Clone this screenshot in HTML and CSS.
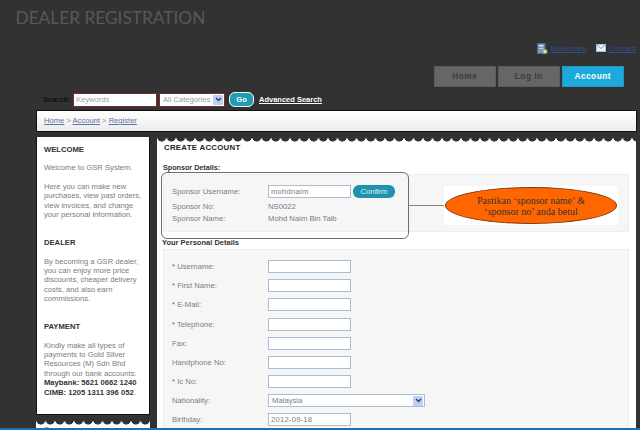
FILE: index.html
```html
<!DOCTYPE html>
<html lang="en">
<head>
    <meta charset="UTF-8">
    <title>Dealer Registration</title>
    <link rel="stylesheet" href="styles.css">
</head>
<body>
    <div class="page">
        <h1 class="page-title">DEALER REGISTRATION</h1>

        <!-- links atas -->
        <div class="top-links">
            <a href="#" class="top-link">
                <svg width="11" height="11" viewBox="0 0 11 11"><rect x="0.500" y="0.500" width="7.500" height="10" fill="#7497bd" stroke="#456b96"/><rect x="2" y="2" width="4.500" height="1.500" fill="#d5e2f0"/><rect x="2" y="5" width="4.500" height="1" fill="#b7cbe0"/><circle cx="8" cy="8.500" r="2.500" fill="#8ab85a"/><path d="M8 7v3M6.500 8.500h3" stroke="#fff" stroke-width="0.800"/></svg>
                <span>Bookmark</span>
            </a>
            <a href="#" class="top-link">
                <svg width="10" height="8" viewBox="0 0 10 8"><rect x="0.500" y="0.500" width="9" height="7" fill="#eef3f9" stroke="#a9bed8"/><path d="M1 1l4 3.500L9 1" fill="none" stroke="#7f9cc0"/></svg>
                <span>Contact</span>
            </a>
        </div>

        <div class="tabs">
            <a href="#" class="tab">Home</a>
            <a href="#" class="tab">Log In</a>
            <a href="#" class="tab tab-active">Account</a>
        </div>

        <form class="search">
            <label class="search-label">Search:</label>
            <input class="search-input" type="text" placeholder="Keywords">
            <div class="search-select">
                <span>All Categories</span>
                <span class="arrow"><svg width="7" height="5" viewBox="0 0 7 5"><path d="M1 1l2.500 2.500L6 1" fill="none" stroke="#2a3f78" stroke-width="1.500"/></svg></span>
            </div>
            <a href="#" class="go-btn">Go</a>
            <a href="#" class="adv-link">Advanced Search</a>
        </form>

        <div class="breadcrumb">
            <a href="#">Home</a> &gt; <a href="#">Account</a> &gt; <a href="#">Register</a>
        </div>

        <div class="columns">
            <div class="side">
                <div class="side-box">
                    <h3>WELCOME</h3>
                    <p>Welcome to GSR System.</p>
                    <p>Here you can make new purchases, view past orders, view invoices, and change your personal information.</p>
                    <h3 class="side-head">DEALER</h3>
                    <p>By becoming a GSR dealer, you can enjoy more price discounts, cheaper delivery costs, and also earn commissions.</p>
                    <h3 class="side-head">PAYMENT</h3>
                    <p>Kindly make all types of payments to Gold Silver Resources (M) Sdn Bhd through our bank accounts:<br>
                    <b>Maybank: 5621 0662 1240</b><br>
                    <b>CIMB: 1205 1311 396 052</b>.</p>
                </div>
                <div class="scallop side-scallop"></div>
                <div class="side-next">
                    <svg width="9" height="9" viewBox="0 0 9 9"><circle cx="4.500" cy="4.500" r="4" fill="#dbe6f4" stroke="#6d8fc0"/></svg>
                    <span>INFORMATION</span>
                </div>
            </div>

            <div class="main">
                <div class="scallop"></div>
                <div class="main-body">
                    <h2>CREATE ACCOUNT</h2>
                    <div class="section-title">Sponsor Details:</div>
                    <div class="panel sponsor-panel">
                        <div class="row row-sponsor">
                            <label>Sponsor Username:</label>
                            <input class="field" type="text" value="mohdnaim">
                            <a href="#" class="confirm-btn">Confirm</a>
                        </div>
                        <div class="row row-plain row-first"><label>Sponsor No:</label><span>NS0022</span></div>
                        <div class="row row-plain"><label>Sponsor Name:</label><span>Mohd Naim Bin Taib</span></div>

                        <!-- anotasi di atas screenshot -->
                        <div class="callout-box"></div>
                        <div class="callout-line"></div>
                        <div class="callout-note">
                            <div class="ellipse">Pastikan ‘sponsor name’ &amp;<br>‘sponsor no’ anda betul</div>
                        </div>
                    </div>

                    <div class="section-title section-two">Your Personal Details</div>
                    <div class="panel personal-panel">
                        <div class="row"><label><i>*</i> Username:</label><input class="field" type="text"></div>
                        <div class="row"><label><i>*</i> First Name:</label><input class="field" type="text"></div>
                        <div class="row"><label><i>*</i> E-Mail:</label><input class="field" type="text"></div>
                        <div class="row"><label><i>*</i> Telephone:</label><input class="field" type="text"></div>
                        <div class="row"><label>Fax:</label><input class="field" type="text"></div>
                        <div class="row"><label>Handphone No:</label><input class="field" type="text"></div>
                        <div class="row"><label><i>*</i> Ic No:</label><input class="field" type="text"></div>
                        <div class="row row-nat">
                            <label>Nationality:</label>
                            <div class="nat-select">
                                <span>Malaysia</span>
                                <span class="arrow"><svg width="7" height="5" viewBox="0 0 7 5"><path d="M1 1l2.500 2.500L6 1" fill="none" stroke="#2a3f78" stroke-width="1.500"/></svg></span>
                            </div>
                        </div>
                        <div class="row"><label>Birthday:</label><input class="field" type="text" value="2012-09-18"></div>
                    </div>
                </div>
            </div>
        </div>
    </div>
    <div class="bottom-line"></div>
</body>
</html>
```

FILE: styles.css
```css
* {
    box-sizing: border-box;
}

html, body {
    margin: 0;
    padding: 0;
    height: 430px;
    overflow: hidden;
}

body {
    background-color: #323232;
    font-family: "Liberation Sans", Arial, sans-serif;
    font-size: 9px;
    color: #7a7a7a;
    position: relative;
}

a {
    color: #5f70aa;
}

.page {
    height: 430px;
    overflow: hidden;
    padding-left: 36px;
    padding-right: 3px;
}

.page-title {
    margin: 8px 0 0 -20.500px;
    height: 19px;
    font-family: Lato, "Open Sans", sans-serif;
    font-size: 17.300px;
    line-height: 19px;
    font-weight: 400;
    color: #54595d;
}

.top-links {
    display: flex;
    justify-content: flex-end;
    align-items: center;
    gap: 10px;
    margin-top: 13px;
    height: 16px;
    padding-right: 1px;
}

.top-link {
    display: flex;
    align-items: center;
    gap: 2px;
    color: #2c4f8e;
    font-size: 8px;
}

.tabs {
    display: flex;
    justify-content: flex-end;
    gap: 1.500px;
    margin-top: 10px;
    padding-right: 13px;
}

.tab {
    width: 62.500px;
    height: 21px;
    background-color: #666666;
    border: 1px solid #5b5b5b;
    color: #3c3c3c;
    font-size: 8.300px;
    font-weight: 700;
    letter-spacing: 0.500px;
    line-height: 19px;
    text-align: center;
    text-decoration: none;
}

.tab-active {
    background-color: #1ea9dc;
    border-color: #1b98c6;
    color: #ffffff;
}

.search {
    display: flex;
    align-items: center;
    margin-top: 5px;
    height: 15px;
    margin-left: 7px;
}

.search-label {
    color: #111111;
    font-size: 7.600px;
    font-weight: 700;
    width: 30px;
}

.search-input {
    width: 84px;
    height: 14px;
    border: 1px solid #7d2a2a;
    background: #fff;
    font-family: inherit;
    font-size: 7.600px;
    padding: 0 2px;
    margin: 0;
}

.search-input::placeholder {
    color: #a0a0a0;
}

.search-select {
    width: 66px;
    height: 14px;
    margin-left: 2px;
    border: 1px solid #7d2a2a;
    background: #fff;
    color: #9a9a9a;
    font-size: 7.600px;
    display: flex;
    align-items: center;
    justify-content: space-between;
    padding: 0 1px 0 3px;
}

.arrow {
    width: 10px;
    height: 10px;
    background-color: #bfd0f4;
    display: flex;
    align-items: center;
    justify-content: center;
}

.go-btn {
    width: 25px;
    height: 15px;
    margin-left: 4px;
    background-color: #1f9db5;
    border: 1px solid #ffffff;
    border-radius: 6px;
    color: #ffffff;
    font-size: 7.600px;
    font-weight: 700;
    line-height: 13px;
    text-align: center;
    text-decoration: none;
}

.adv-link {
    margin-left: 5px;
    color: #ffffff;
    font-size: 7.500px;
    font-weight: 700;
}

.breadcrumb {
    height: 22px;
    margin-top: 3px;
    background: linear-gradient(#ffffff, #ececec);
    border: 1px solid #111111;
    padding-left: 7px;
    line-height: 20px;
    font-size: 7.600px;
    color: #8a8a8a;
    width: 601px;
}

.columns {
    display: flex;
    gap: 7px;
    margin-top: 5px;
}

.side {
    width: 114px;
    flex-shrink: 0;
}

.side-box {
    background-color: #ffffff;
    border: 1px solid #111111;
    border-top: 0;
    height: 278px;
    padding: 8px 7px 0;
    line-height: 9.400px;
    font-size: 7.650px;
}

.side-box h3 {
    margin: 0 0 8.800px;
    font-size: 7.650px;
    color: #333333;
    line-height: 9.400px;
}

.side-box .side-head {
    margin-top: 18.800px;
}

.side-box p {
    margin: 0 -2px 9.400px 0;
    color: #7d7d7d;
}

.side-box b {
    color: #333333;
}

.scallop {
    height: 5px;
    background-color: #ffffff;
    background-image: radial-gradient(circle at 4.750px 0, #323232 4.300px, transparent 4.800px);
    background-size: 9.500px 5px;
    background-repeat: repeat-x;
}

.side-scallop {
    margin-top: 5px;
}

.side-next {
    display: flex;
    gap: 4px;
    background: #fff;
    height: 10px;
    padding: 2px 0 0 6px;
    font-size: 7.600px;
    line-height: 9px;
    color: #555;
}

.main {
    width: 479px;
    flex-shrink: 0;
}

.main-body {
    background-color: #ffffff;
    height: 300px;
    padding: 1px 6px 0;
}

.main-body h2 {
    margin: 0 0 0 1px;
    font-size: 7.800px;
    letter-spacing: 0.300px;
    color: #222222;
    line-height: 10px;
}

.section-title {
    margin-top: 10px;
    font-size: 7.200px;
    font-weight: 700;
    color: #333333;
    line-height: 9px;
}

.section-two {
    margin: 6.500px 0 0 -1px;
    font-size: 7.500px;
}

.panel {
    background-color: #f6f6f6;
    border: 1px solid #eeeeee;
    padding: 7px 8px;
    margin-top: 1.500px;
    width: 466px;
}

.sponsor-panel {
    position: relative;
    height: 58px;
    padding-top: 9px;
}

.row {
    display: flex;
    align-items: center;
    height: 19.300px;
}

.row label {
    width: 96px;
    font-size: 7.700px;
    color: #7d7d7d;
}

.row i {
    color: #d04040;
    font-style: normal;
}

.row span {
    color: #7d7d7d;
    font-size: 7.700px;
}

.row-sponsor {
    height: 15px;
}

.row-plain {
    height: 12px;
}

.row-first {
    margin-top: 2px;
}

.field {
    width: 83px;
    height: 13px;
    border: 1px solid #a9bdd6;
    background: #ffffff;
    font-family: inherit;
    font-size: 7.700px;
    color: #7d7d7d;
    padding: 0 2px;
    margin: 0;
    letter-spacing: 0.200px;
}

.confirm-btn {
    width: 42px;
    height: 13px;
    margin-left: 2px;
    background-color: #1f93ad;
    border-radius: 6px;
    color: #dff3f7;
    font-size: 7.700px;
    line-height: 13px;
    text-align: center;
    text-decoration: none;
}

.callout-box {
    position: absolute;
    left: -3px;
    top: -3px;
    width: 248px;
    height: 67px;
    border: 1px solid #6d6d6d;
    border-radius: 6px;
}

.callout-line {
    position: absolute;
    left: 244px;
    top: 30px;
    width: 37px;
    height: 1px;
    background-color: #8d7f70;
}

.callout-note {
    position: absolute;
    left: 280px;
    top: 11px;
    width: 174px;
    height: 39px;
    background-color: #ffffff;
    padding: 1px;
}

.ellipse {
    width: 172px;
    height: 37px;
    background-color: #ff6600;
    border: 1px solid #7a3a10;
    border-radius: 50%;
    color: #333333;
    font-family: "Liberation Serif", serif;
    font-size: 10px;
    line-height: 11px;
    text-align: center;
    padding-top: 7.500px;
}

.row-nat {
    height: 18px;
}

.nat-select {
    width: 157px;
    height: 13px;
    border: 1px solid #a9bdd6;
    background: #fff;
    display: flex;
    align-items: center;
    justify-content: space-between;
    padding: 0 1px 0 3px;
}

.bottom-line {
    position: absolute;
    left: 0;
    right: 0;
    bottom: 0;
    height: 2px;
    background-color: #1c6fb8;
}
```
